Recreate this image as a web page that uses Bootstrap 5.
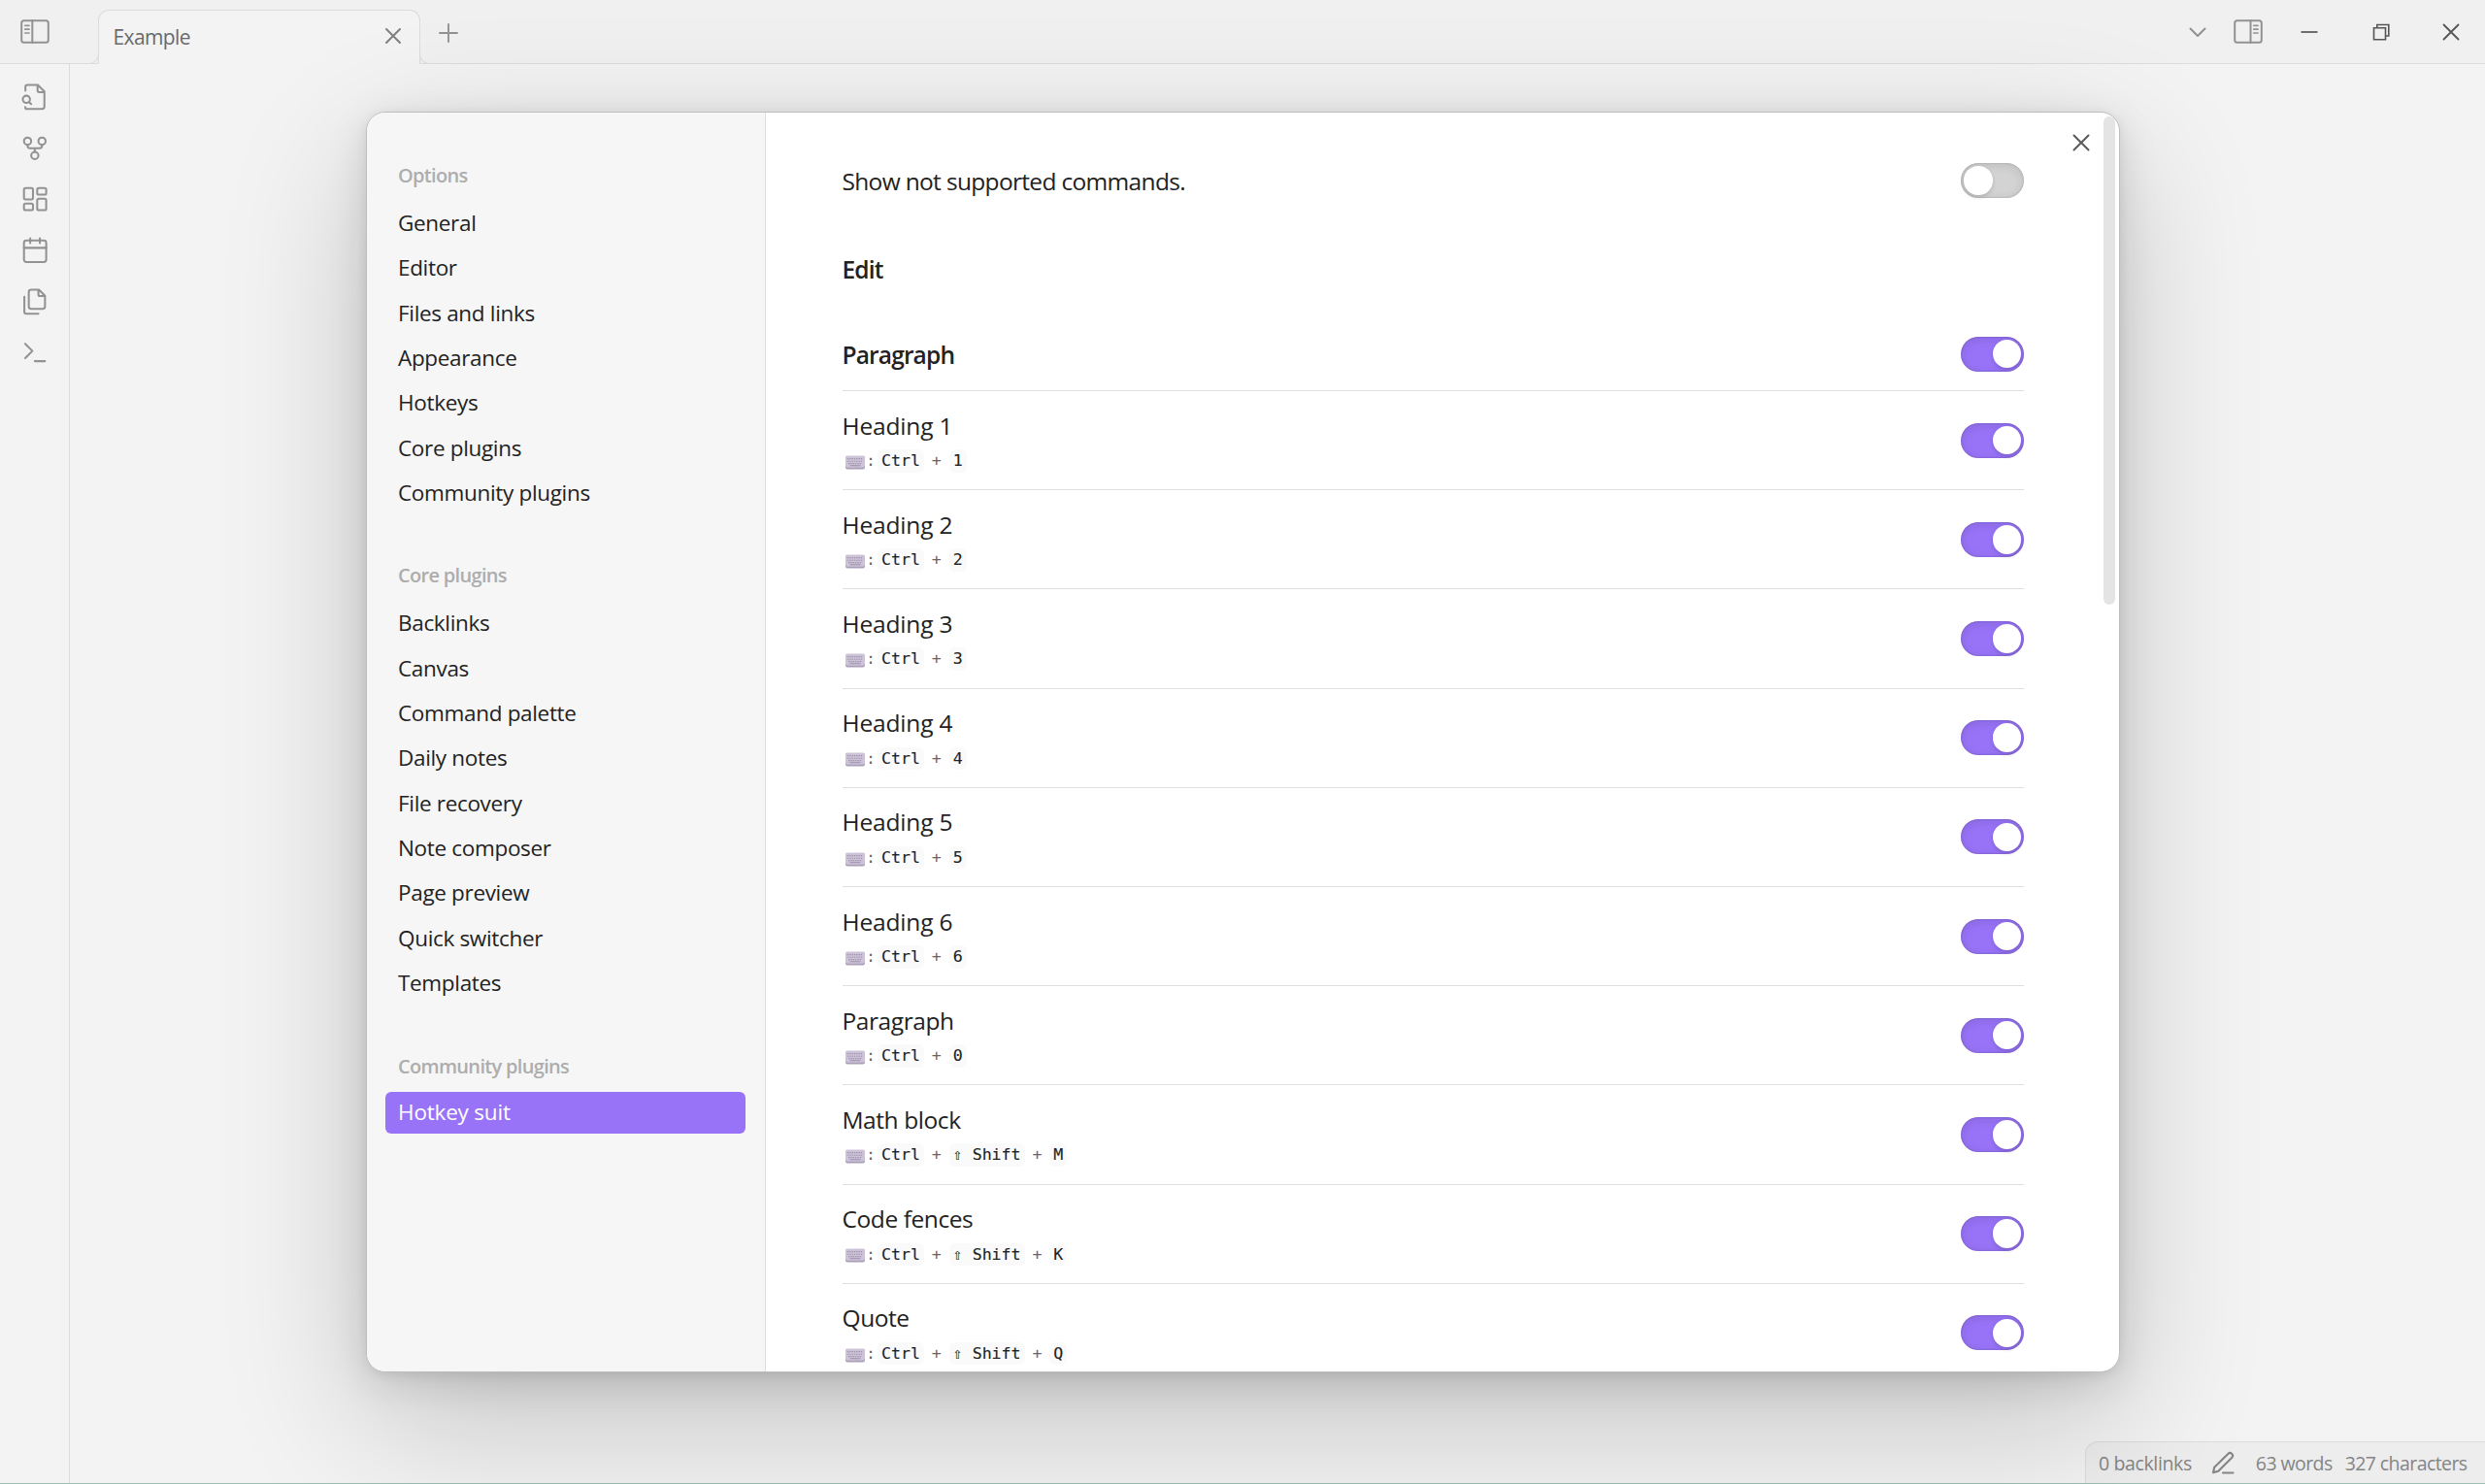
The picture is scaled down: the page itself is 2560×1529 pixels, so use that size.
<!DOCTYPE html>
<html lang="en">
<head>
<meta charset="utf-8">
<title>Example - Settings</title>
<link href="https://cdn.jsdelivr.net/npm/bootstrap@5.3.0/dist/css/bootstrap.min.css" rel="stylesheet">
<style>
  :root { --line: #dcdcdc; --accent: #9873f7; --ink: #222; }
  html, body { height: 100%; }
  body { font-family: "Open Sans", "Noto Sans", sans-serif; color: var(--ink); background: #f3f3f3; overflow: hidden; }
  svg { display: block; fill: none; stroke: currentColor; stroke-linecap: round; stroke-linejoin: round; flex: none; }
  .app { height: 1529px; border-bottom: 1px solid #9dbfb4; }

  /* title bar */
  .titlebar { height: 66px; background: #f0f0f0; border-bottom: 1px solid var(--line); color: #929292; padding: 0 26px 0 21px; }
  .titlebar .left-toggle { margin: 20px 50px 0 0; }
  .doc-tab { position: relative; width: 332px; height: 56px; margin-top: 10px; padding: 0 18.5px 0 14.5px; background: #f3f3f3; border: 1.5px solid var(--line); border-bottom: 0; border-radius: 11px 11px 0 0; color: #696969; font-size: 21px; letter-spacing: -.6px; line-height: 54px; }
  .doc-tab::before, .doc-tab::after { content: ""; position: absolute; bottom: 0; width: 10px; height: 10px; border: 0 solid var(--line); border-bottom-width: 1px; clip-path: inset(0); }
  .doc-tab::before { left: -10px; border-right-width: 1px; border-bottom-right-radius: 10px; }
  .doc-tab::after { right: -10px; border-left-width: 1px; border-bottom-left-radius: 10px; }
  .doc-tab svg { margin-top: 17px; color: #808080; }
  .new-tab { margin: 24px 0 0 19px; }
  .win-tools { margin-top: 20px; height: 25px; }
  .win-btn { color: #555; }

  /* ribbon */
  .ribbon { width: 72px; border-right: 1px solid var(--line); padding-top: 7.8px; color: #929292; }
  .ribbon a { height: 52.6px; color: inherit; }

  .statusbar { background: #ededed; border: 1px solid #dcdcdc; border-right: 0; border-bottom: 0; border-radius: 13px 0 0 0; height: 43px; width: 412px; padding: 0 18.5px 0 13px; font-size: 19.5px; letter-spacing: -.37px; color: #858585; line-height: 44px; }
  .statusbar .words { letter-spacing: -.58px; }
  .statusbar svg { margin: 9px 0 0 20.5px; }

  /* settings dialog */
  .settings { position: absolute; left: 377px; top: 115px; width: 1807px; height: 1299px; border: 1px solid #bdbdbd; border-radius: 20px; background: #fff; overflow: hidden; box-shadow: 0 3px 12px rgba(0,0,0,.071), 0 10.4px 41px rgba(0,0,0,.112), 0 49.5px 148.5px rgba(0,0,0,.2); }
  .side { width: 411px; background: #f6f6f6; border-right: 1px solid #dedede; padding: 50px 20px 0 19px; }
  .side-title { height: 30px; line-height: 30px; margin-bottom: 13px; padding-left: 13px; font-size: 20px; font-weight: 600; letter-spacing: -.68px; color: #adadad; }
  .side-group { margin-bottom: 45px; }
  .side-group:last-child .side-title { margin-bottom: 11.5px; }
  .side .nav-link { height: 43px; line-height: 42.5px; margin-bottom: 3.35px; padding: 0 13px; border-radius: 6px; font-size: 22.5px; letter-spacing: -.33px; color: var(--ink); }
  .side .nav-link.active { background: var(--accent); color: #fff; letter-spacing: -.2px; }
  .main-pane { padding: 0 98px 0 79px; }
  .opt { height: 102.2px; border-top: 1px solid #dfdfdf; }
  .head-row { padding-top: 32px; height: 107px; }
  .head-row.first { padding-top: 51px; height: 89px; }
  .head-row.plain { padding-top: 53px; height: 90px; }
  .opt-name, .opt-head { font-size: 24.5px; line-height: 34px; letter-spacing: -.42px; margin-left: -.5px; }
  .opt-num { letter-spacing: -.15px; }
  .opt-head { font-weight: 600; letter-spacing: -.85px; padding-top: 2px; }
  .opt-wide { letter-spacing: -.67px; padding-top: 1px; }
  .opt .opt-name { margin-top: 1px; }
  .hotkey { height: 23.5px; margin-top: 7.5px; font: 16.6px/23.5px "DejaVu Sans Mono", monospace; color: #666; padding-left: 4px; }
  .hotkey svg { margin: 3px 3px 0 -2px; }
  .colon { width: 9.5px; margin-left: -2px; margin-right: 2.5px; }
  .chip { background: #fafafa; border-radius: 6px; padding: 0 4px; color: var(--ink); height: 23.5px; white-space: pre; -webkit-text-stroke: .1px var(--ink); }
  .plus { width: 25.7px; text-align: center; }
  .toggle { width: 65px; height: 36px; border-radius: 18px; background: var(--accent); box-shadow: inset 0 2px 11px rgba(0,0,0,.11), inset 0 0 2px rgba(0,0,0,.25); padding: 0 3px; flex: none; }
  .toggle.off { background: #d3d3d3; }
  .toggle i { width: 29.5px; height: 29.5px; border-radius: 50%; background: #fff; box-shadow: 0 2px 4px rgba(0,0,0,.15); }
  .close-x { position: absolute; left: 1756.5px; top: 22px; color: #5a5a5a; }
  .scroll-thumb { position: absolute; left: 1789px; top: 4px; width: 12px; height: 503px; border-radius: 6px; background: #e4e4e4; }
</style>
</head>
<body>
<div class="app d-flex flex-column">
  <header class="titlebar d-flex align-items-start flex-shrink-0">
    <svg class="left-toggle" width="30" height="25" stroke-width="2"><rect x="1.2" y="1.2" width="27.6" height="22.6" rx="2.5"/><path d="M12.3 1v23"/><path stroke-width="1.7" d="M4.8 6.3H9M4.8 10.2H9M4.8 14H9"/></svg>
    <div class="doc-tab d-flex justify-content-between"><span>Example</span>
      <svg width="18" height="18" stroke-width="2"><path d="M2 2l14 14M16 2L2 16"/></svg></div>
    <svg class="new-tab" width="20" height="20" stroke-width="1.9"><path d="M10 1v18M1 10h18"/></svg>
    <div class="win-tools d-flex align-items-center ms-auto">
      <svg width="18" height="12" stroke-width="2"><path d="M1.5 2.5L9 10L16.5 2.5"/></svg>
      <svg style="margin-left:28px" width="30" height="25" stroke-width="2"><rect x="1.2" y="1.2" width="27.6" height="22.6" rx="2.5"/><path d="M17.5 1v23"/><path stroke-width="1.7" d="M20.8 6.3H25M20.8 10.2H25M20.8 14H25"/></svg>
      <svg class="win-btn" style="margin-left:39.5px" width="18" height="4" stroke-width="1.7"><path stroke-linecap="butt" d="M.5 2h17"/></svg>
      <svg class="win-btn" style="margin-left:55.5px" width="18" height="18" stroke-width="1.6"><path stroke-linejoin="miter" d="M1.5 4.8h12v12h-12zM4.8 4.5V1.5h12v11.5H14"/></svg>
      <svg class="win-btn" style="margin-left:54.5px" width="18" height="18" stroke-width="1.8"><path d="M1.5 1.5l15 15M16.5 1.5l-15 15"/></svg>
    </div>
  </header>

  <div class="d-flex flex-grow-1">
    <nav class="ribbon d-flex flex-column">
      <a class="d-flex align-items-center justify-content-center"><svg width="29.7" height="29.7" viewBox="0 0 24 24" stroke-width="1.65"><path d="M4.5 22H18a2 2 0 0 0 2-2V7.500L14.500 2H6a1.500 1.500 0 0 0-1.800 1.500V6.800M4 20.500c0 .8.200 1.200.8 1.500M14.300 2v4.500a1.500 1.500 0 0 0 1.500 1.500H20M9 18l-1.700-1.700"/><circle cx="5" cy="14" r="3"/></svg></a>
      <a class="d-flex align-items-center justify-content-center"><svg width="29.7" height="29.7" viewBox="0 0 24 24" stroke-width="1.65"><circle cx="12" cy="18" r="3"/><circle cx="6" cy="6" r="3"/><circle cx="18" cy="6" r="3"/><path d="M18 9v1c0 1.100-.900 2-2 2H8a2 2 0 0 1-2-2V9M12 12v3"/></svg></a>
      <a class="d-flex align-items-center justify-content-center"><svg width="29.7" height="29.7" viewBox="0 0 24 24" stroke-width="1.65"><rect x="3" y="3" width="7.5" height="9.5" rx="1.3"/><rect x="14" y="3" width="7.5" height="5.5" rx="1.3"/><rect x="14" y="12" width="7.5" height="9.5" rx="1.3"/><rect x="3" y="16" width="7.5" height="5.5" rx="1.3"/></svg></a>
      <a class="d-flex align-items-center justify-content-center"><svg width="29.7" height="29.7" viewBox="0 0 24 24" stroke-width="1.65"><rect x="3" y="3.8" width="18.5" height="18" rx="2"/><path d="M16.2 2v4M8.2 2v4M3 10h18.5"/></svg></a>
      <a class="d-flex align-items-center justify-content-center"><svg width="29.7" height="29.7" viewBox="0 0 24 24" stroke-width="1.65"><path d="M15.500 2H9a2 2 0 0 0-2 2v12a2 2 0 0 0 2 2h9.500a2 2 0 0 0 2-2V7zM3.300 7.800v12.700A1.500 1.500 0 0 0 4.800 22H15M15 2v4a1.300 1.300 0 0 0 1.300 1.300h4.200"/></svg></a>
      <a class="d-flex align-items-center justify-content-center"><svg width="29.7" height="29.7" viewBox="0 0 24 24" stroke-width="1.65"><path d="M4 17l6-6-6-6M12 19.5h8.500"/></svg></a>
    </nav>
    <div class="flex-grow-1 d-flex align-items-end justify-content-end">
      <div class="statusbar d-flex">
        <span>0 backlinks</span>
        <svg width="24" height="25" stroke-width="2.1"><path d="M2 22.300l1.200-5.600L17.300 3a2.700 2.700 0 0 1 4 3.800L7.300 20.800zM12 22.500h10.500"/></svg>
        <span class="words" style="margin-left:21.5px">63 words</span>
        <span class="words ms-auto">327 characters</span>
      </div>
    </div>
  </div>
</div>

<div class="settings d-flex" role="dialog">
  <aside class="side flex-shrink-0">
    <div class="side-group">
      <div class="side-title">Options</div>
      <nav class="nav flex-column">
        <a class="nav-link">General</a><a class="nav-link">Editor</a><a class="nav-link">Files and links</a><a class="nav-link">Appearance</a><a class="nav-link">Hotkeys</a><a class="nav-link">Core plugins</a><a class="nav-link">Community plugins</a>
      </nav>
    </div>
    <div class="side-group">
      <div class="side-title">Core plugins</div>
      <nav class="nav flex-column">
        <a class="nav-link">Backlinks</a><a class="nav-link">Canvas</a><a class="nav-link">Command palette</a><a class="nav-link">Daily notes</a><a class="nav-link">File recovery</a><a class="nav-link">Note composer</a><a class="nav-link">Page preview</a><a class="nav-link">Quick switcher</a><a class="nav-link">Templates</a>
      </nav>
    </div>
    <div class="side-group">
      <div class="side-title">Community plugins</div>
      <nav class="nav flex-column"><a class="nav-link active">Hotkey suit</a></nav>
    </div>
  </aside>
  <main class="main-pane flex-grow-1" id="pane">
    <div class="head-row first d-flex justify-content-between align-items-center"><span class="opt-name opt-wide">Show not supported commands.</span><span class="toggle off d-flex align-items-center"><i></i></span></div>
    <div class="head-row plain d-flex align-items-center"><span class="opt-head">Edit</span></div>
    <div class="head-row d-flex justify-content-between align-items-center"><span class="opt-head">Paragraph</span><span class="toggle d-flex align-items-center justify-content-end"><i></i></span></div>
  </main>
  <svg class="close-x" width="18" height="18" stroke-width="2"><path d="M1.5 1.5l15 15M16.5 1.5l-15 15"/></svg>
  <div class="scroll-thumb"></div>
</div>

<template id="kbd">
  <svg width="21" height="15" stroke="none"><rect x="1" y="1" width="20" height="13.5" rx="2" fill="#a99db8" style="stroke:none"/><rect x="1" y=".5" width="20" height="12.3" rx="2" fill="#cdc3d8" style="stroke:none"/><path d="M3 3.600h16M3 6.200h16M4 8.600h14" stroke="#9c90ac" stroke-width="1.1" stroke-dasharray="1.3 1" stroke-linecap="butt"/><path d="M6 10.800h10" stroke="#9c90ac" stroke-width="1.1"/></svg>
</template>
<script>
  const rows = [
    ['Heading 1', 'Ctrl', '1'], ['Heading 2', 'Ctrl', '2'], ['Heading 3', 'Ctrl', '3'],
    ['Heading 4', 'Ctrl', '4'], ['Heading 5', 'Ctrl', '5'], ['Heading 6', 'Ctrl', '6'],
    ['Paragraph', 'Ctrl', '0'], ['Math block', 'Ctrl', '⇧ Shift', 'M'],
    ['Code fences', 'Ctrl', '⇧ Shift', 'K'], ['Quote', 'Ctrl', '⇧ Shift', 'Q']
  ];
  const icon = document.getElementById('kbd').innerHTML;
  document.getElementById('pane').insertAdjacentHTML('beforeend', rows.map(([name, ...keys]) => `
    <div class="opt d-flex justify-content-between align-items-center">
      <div><div class="opt-name ${/\d/.test(name) ? 'opt-num' : ''}">${name}</div>
      <div class="hotkey d-flex align-items-center">${icon}<span class="colon">:</span>${keys.map(k => `<span class="chip">${k}</span>`).join('<span class="plus">+</span>')}</div></div>
      <span class="toggle d-flex align-items-center justify-content-end"><i></i></span>
    </div>`).join(''));
</script>
<script src="https://cdn.jsdelivr.net/npm/bootstrap@5.3.0/dist/js/bootstrap.bundle.min.js"></script>
</body>
</html>
